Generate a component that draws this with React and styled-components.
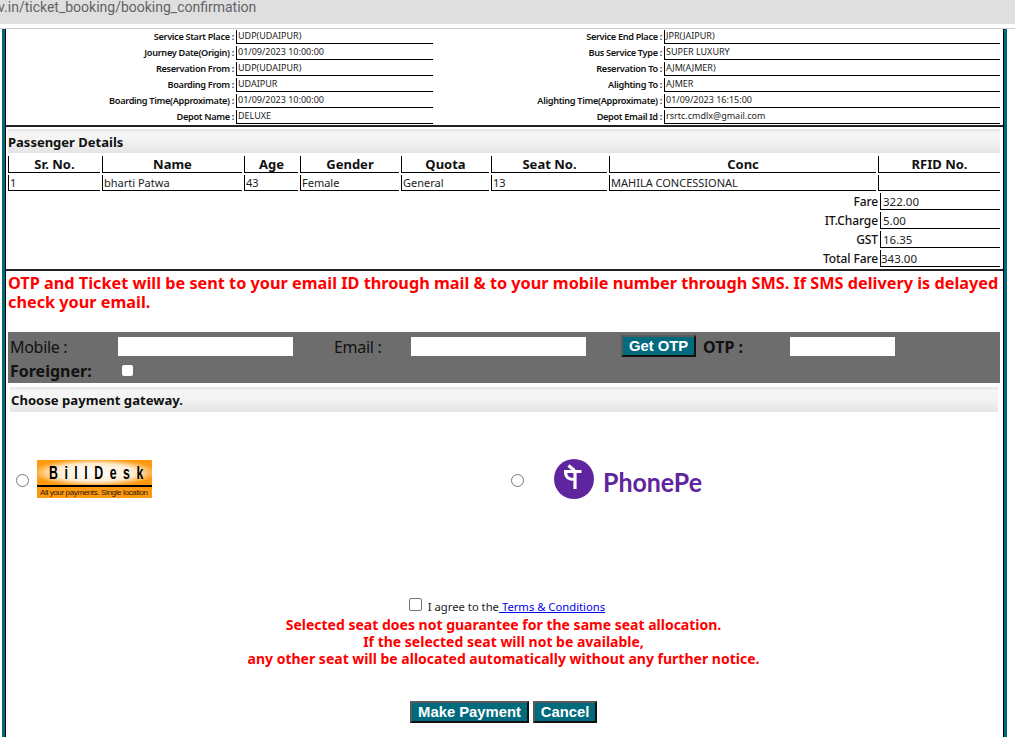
import React from 'react';
import styled, { createGlobalStyle } from 'styled-components';

const GlobalStyle = createGlobalStyle`
  html, body { margin: 0; padding: 0; background: #fff; }
  body { height: 737px; overflow: hidden; font-family: "Noto Sans", Tahoma, sans-serif; color: #000; }
`;

const AddressBar = styled.div`
  height: 24px;
  background: #dfdfdf;
  color: #5f6368;
  font: 14px/15px Roboto, sans-serif;
  white-space: nowrap;
  overflow: hidden;
`;
const AddressText = styled.div`
  margin-left: -2px;
`;
const BarGap = styled.div`
  height: 5px;
  background: #fff;
  border-bottom: 1px solid #ccc;
  box-sizing: border-box;
`;
const Frame = styled.div`
  margin-left: 2px;
  width: 1005px;
  height: 708px;
  box-sizing: border-box;
  border-left: 3px solid #006b7d;
  border-right: 3px solid #006b7d;
  background: #fff;
`;
const FrameInner = styled.div`
  height: 100%;
  box-sizing: border-box;
  border-left: 1px solid #000;
  border-right: 1px solid #000;
  padding-left: 2px;
  display: flex;
  flex-direction: column;
`;
const InfoGrid = styled.div`
  display: grid;
  grid-template-columns: 228px 197px 231px 336px;
  grid-auto-rows: 16px;
`;
const InfoLabel = styled.div`
  text-align: right;
  padding-right: 2px;
  font-size: 9.2px;
  letter-spacing: -0.33px;
  font-weight: 600;
  line-height: 16px;
  white-space: nowrap;
  color: #111;
`;
const InfoValue = styled.div`
  border-left: 1px solid #000;
  border-bottom: 1px solid #000;
  box-sizing: border-box;
  height: 14px;
  margin-top: 1px;
  padding-left: 1px;
  font-size: 9px;
  line-height: 11px;
  color: #222;
  white-space: nowrap;
`;
const Divider = styled.div`
  height: 2px;
  background: #222;
  margin: 0 0 ${p => p.$bottom}px -2px;
`;
const SectionBand = styled.div`
  height: 24px;
  background: linear-gradient(#e4e4e4 0, #f6f6f6 4px, #f3f3f3 50%, #e4e4e4 100%);
  font-size: 13px;
  font-weight: 700;
  line-height: 26px;
  color: #111;
  margin-right: 3px;
`;
const PassengerGrid = styled.div`
  display: grid;
  grid-template-columns: 92px 140px 54px 99px 88px 116px 267px 122px;
  column-gap: 2px;
  margin-top: 3px;
`;
const HeadCell = styled.div`
  height: 17px;
  border-left: 1px solid #000;
  border-bottom: 1px solid #000;
  box-sizing: border-box;
  text-align: center;
  font-size: 13px;
  font-weight: 700;
  line-height: 16px;
  color: #111;
`;
const BodyCell = styled.div`
  height: 16px;
  margin-top: 2px;
  border-left: 1px solid #000;
  border-bottom: 1px solid #000;
  box-sizing: border-box;
  font-size: 11px;
  line-height: 16px;
  color: #222;
  padding-left: 1px;
`;
const FareRow = styled.div`
  display: flex;
  justify-content: flex-end;
  height: 19px;
  margin-right: 3px;
  margin-top: ${p => (p.$first ? 2 : 0)}px;
`;
const FareLabel = styled.div`
  font-size: 12px;
  letter-spacing: -0.1px;
  line-height: 17px;
  font-weight: 500;
  color: #111;
  padding-right: 2px;
`;
const FareValue = styled.div`
  width: 120px;
  height: 17px;
  border-left: 1px solid #000;
  border-bottom: 1px solid #000;
  box-sizing: border-box;
  font-size: 11.5px;
  line-height: 18px;
  padding-left: ${p => (p.$tight ? 0 : 2)}px;
  color: #222;
`;
const Notice = styled.div`
  color: #f00;
  font-size: 16.25px;
  font-weight: 700;
  line-height: 19px;
  margin-top: 3px;
  height: 58px;
  white-space: nowrap;
`;
const OtpBar = styled.div`
  height: 51px;
  background: #6d6d6d;
  margin-right: 3px;
  display: flex;
  flex-direction: column;
  gap: 1px;
  padding-top: 3px;
  box-sizing: border-box;
`;
const OtpRow = styled.div`
  display: flex;
  align-items: center;
  height: 23px;
`;
const OtpLabel = styled.div`
  font-size: 16px;
  letter-spacing: ${p => (p.$bold ? 0 : -0.3)}px;
  color: #111;
  width: ${p => p.$w}px;
  padding-left: ${p => p.$left || 0}px;
  box-sizing: border-box;
  font-weight: ${p => (p.$bold ? 700 : 400)};
  flex: none;
`;
const OtpInput = styled.input`
  border: 0;
  padding: 0;
  background: #fff;
  height: 19px;
  width: ${p => p.$w}px;
  margin-right: ${p => p.$after || 0}px;
  flex: none;
`;
const TealButton = styled.button`
  background: #006b7d;
  color: #fff;
  font: 700 14.8px "Liberation Sans", Arial, sans-serif;
  border: 2px solid;
  border-color: #5a5a5a #111 #111 #5a5a5a;
  padding: 0;
  height: 22px;
  width: ${p => p.$w}px;
  flex: none;
`;
const OtpButton = styled(TealButton)`
  margin-top: -2px;
`;
const ForeignBox = styled.span`
  display: block;
  width: 11px;
  height: 11px;
  border-radius: 2px;
  background: #fff;
  flex: none;
`;
const GatewayBand = styled(SectionBand)`
  margin: 4px 5px 0 2px;
  height: 25px;
  font-size: 13.1px;
  padding-left: 1px;
`;
const GatewayRow = styled.div`
  display: flex;
  align-items: center;
  height: 40px;
  margin-top: 47px;
`;
const Radio = styled.span`
  display: block;
  width: 11px;
  height: 11px;
  border: 1px solid #767676;
  border-radius: 50%;
  margin-left: ${p => p.$left}px;
  margin-top: 2px;
  flex: none;
`;
const GatewayLogo = styled.svg`
  display: block;
  margin-left: ${p => p.$left}px;
  flex: none;
`;
const AgreeRow = styled.div`
  display: flex;
  justify-content: center;
  align-items: center;
  box-sizing: border-box;
  margin-top: 99px;
  height: 18px;
  padding: 0 0 2px 3px;
  font-size: 11.25px;
  color: #222;
`;
const AgreeBox = styled.span`
  display: block;
  width: 11px;
  height: 11px;
  border: 1px solid #767676;
  border-radius: 2px;
  margin-right: 6px;
  margin-top: -3px;
`;
const TermsLink = styled.a`
  color: #00e;
  text-decoration: underline;
`;
const SeatNotice = styled.div`
  color: #f00;
  text-align: center;
  font-size: 14px;
  font-weight: 700;
  line-height: 17px;
  padding-right: 4px;
`;
const Actions = styled.div`
  display: flex;
  justify-content: center;
  gap: 4px;
  margin-top: 34px;
  padding-right: 4px;
`;

const INFO = [
  ['Service Start Place :', 'UDP(UDAIPUR)', 'Service End Place :', 'JPR(JAIPUR)'],
  ['Journey Date(Origin) :', '01/09/2023 10:00:00', 'Bus Service Type :', 'SUPER LUXURY'],
  ['Reservation From :', 'UDP(UDAIPUR)', 'Reservation To :', 'AJM(AJMER)'],
  ['Boarding From :', 'UDAIPUR', 'Alighting To :', 'AJMER'],
  ['Boarding Time(Approximate) :', '01/09/2023 10:00:00', 'Alighting Time(Approximate) :', '01/09/2023 16:15:00'],
  ['Depot Name :', 'DELUXE', 'Depot Email Id :', 'rsrtc.cmdlx@gmail.com'],
];
const HEADS = ['Sr. No.', 'Name', 'Age', 'Gender', 'Quota', 'Seat No.', 'Conc', 'RFID No.'];
const CELLS = ['1', 'bharti Patwa', '43', 'Female', 'General', '13', 'MAHILA CONCESSIONAL', ''];
const FARES = [['Fare', '322.00'], ['IT.Charge', '5.00'], ['GST', '16.35'], ['Total Fare', '343.00']];

const BillDeskLogo = () => (
  <GatewayLogo $left={8} width="115" height="38" viewBox="0 0 115 38">
    <defs>
      <radialGradient id="glow" cx="50%" cy="50%" r="55%">
        <stop offset="0%" stopColor="#fff" />
        <stop offset="65%" stopColor="#ffeccf" />
        <stop offset="100%" stopColor="#ff9a10" />
      </radialGradient>
    </defs>
    <rect width="115" height="38" fill="#ff9a10" />
    <rect width="115" height="25" fill="url(#glow)" />
    <rect y="25" width="115" height="2" fill="#000" />
    <text transform="scale(0.65 1)" x="18.500" y="19" fontFamily="Liberation Sans" fontWeight="700" fontSize="19" textLength="145">BillDesk</text>
    <text x="3" y="35" fontFamily="Liberation Sans" fontSize="8" fill="#301800" textLength="108">All your payments. Single location</text>
  </GatewayLogo>
);

const PhonePeLogo = () => (
  <GatewayLogo $left={30} width="160" height="40" viewBox="0 0 160 40">
    <circle cx="20" cy="20" r="20" fill="#5f259f" />
    <path d="M14.500 6.500L20.500 11.500M10 12.500H27.500M21 12.500V30M11.500 13C11.500 19 15 20.500 21 20.500"
      fill="none" stroke="#fff" strokeWidth="3.200" />
    <text x="49" y="33" fontFamily="Lato, sans-serif" fontWeight="700" fontSize="27" fill="#5f259f" textLength="99" lengthAdjust="spacingAndGlyphs">PhonePe</text>
  </GatewayLogo>
);

export default function App() {
  return (
    <>
      <GlobalStyle />
      <AddressBar><AddressText>v.in/ticket_booking/booking_confirmation</AddressText></AddressBar>
      <BarGap />
      <Frame>
        <FrameInner>
          <InfoGrid>
            {INFO.map(row => (
              <React.Fragment key={row[0]}>
                <InfoLabel>{row[0]}</InfoLabel>
                <InfoValue>{row[1]}</InfoValue>
                <InfoLabel>{row[2]}</InfoLabel>
                <InfoValue>{row[3]}</InfoValue>
              </React.Fragment>
            ))}
          </InfoGrid>
          <Divider $bottom={2} />
          <SectionBand>Passenger Details</SectionBand>
          <PassengerGrid>
            {HEADS.map(h => <HeadCell key={h}>{h}</HeadCell>)}
            {CELLS.map((c, i) => <BodyCell key={i}>{c}</BodyCell>)}
          </PassengerGrid>
          {FARES.map(([label, value], i) => (
            <FareRow key={label} $first={i === 0}>
              <FareLabel>{label}</FareLabel>
              <FareValue $tight={i === 3}>{value}</FareValue>
            </FareRow>
          ))}
          <Divider $bottom={0} />
          <Notice>
            OTP and Ticket will be sent to your email ID through mail &amp; to your mobile number through SMS. If SMS delivery is delayed<br />
            check your email.
          </Notice>
          <OtpBar>
            <OtpRow>
              <OtpLabel $w={110} $left={2}>Mobile :</OtpLabel>
              <OtpInput $w={175} $after={41} aria-label="Mobile" />
              <OtpLabel $w={77}>Email :</OtpLabel>
              <OtpInput $w={175} $after={35} aria-label="Email" />
              <OtpButton $w={75}>Get OTP</OtpButton>
              <OtpLabel $w={94} $left={7} $bold>OTP :</OtpLabel>
              <OtpInput $w={105} aria-label="OTP" />
            </OtpRow>
            <OtpRow>
              <OtpLabel $w={114} $left={2} $bold>Foreigner:</OtpLabel>
              <ForeignBox />
            </OtpRow>
          </OtpBar>
          <GatewayBand>Choose payment gateway.</GatewayBand>
          <GatewayRow>
            <Radio $left={8} />
            <BillDeskLogo />
            <Radio $left={359} />
            <PhonePeLogo />
          </GatewayRow>
          <AgreeRow>
            <AgreeBox />
            I agree to the<TermsLink href="#">&nbsp;Terms &amp; Conditions</TermsLink>
          </AgreeRow>
          <SeatNotice>
            Selected seat does not guarantee for the same seat allocation.<br />
            If the selected seat will not be available,<br />
            any other seat will be allocated automatically without any further notice.
          </SeatNotice>
          <Actions>
            <TealButton $w={119}>Make Payment</TealButton>
            <TealButton $w={64}>Cancel</TealButton>
          </Actions>
        </FrameInner>
      </Frame>
    </>
  );
}
